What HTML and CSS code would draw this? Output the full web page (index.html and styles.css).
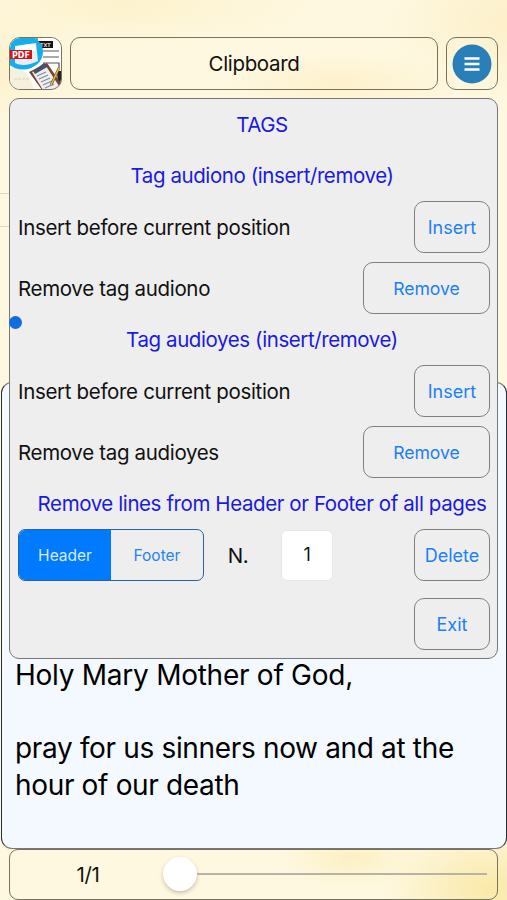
FILE: index.html
```html
<!DOCTYPE html>
<html lang="en">
<head>
<meta charset="utf-8">
<title>Clipboard</title>
<link rel="stylesheet" href="styles.css">
</head>
<body>
<header class="topbar">
  <div class="app-icon">
    <svg viewBox="0 0 52 52" width="52" height="52">
      <rect width="52" height="52" fill="#fff"/>
      <path d="M0 30Q20 29 24 52H0Z" fill="#f4f1de"/>
      <path d="M27 0v10M33 13h16M33 19h16M33 25h16v5" stroke="#555" stroke-width="1.2" fill="none"/>
      <rect x="27" y="3" width="16" height="7" fill="#151515"/>
      <text x="30" y="9" class="txt-label">TXT</text>
      <ellipse cx="13" cy="14" rx="20" ry="17.500" fill="#16aeea"/>
      <path d="M5 8L26 5L28 23Q14 30 5 25Z" fill="#e9ecf2"/>
      <path d="M7 9Q16 5 25 7L26 13H6Z" fill="#fff"/>
      <rect x="0" y="12" width="22" height="9" fill="#d3141d"/>
      <text x="2" y="19.500" class="pdf-label">PDF</text>
      <path d="M47 33h5v13l-4 4Z" fill="#222"/>
      <path d="M19 34L37 25L52 47V52H32Z" fill="#75452c"/>
      <path d="M22 34L36 28L49 48L47 52H33Z" fill="#eeeef2"/>
      <path d="M23 33L34 25L39 28L25 36Z" fill="#49516b"/>
      <path d="M27 38l9-4M29 41l9-4M31 44l9-4M33 47l9-4M35 50l9-4" stroke="#858b98" stroke-width="1.200"/>
      <path d="M49 30L41 47" stroke="#765020" stroke-width="2.600"/>
      <path d="M49 30L41 47" stroke="#e4b742" stroke-width="1.500"/>
      <path d="M4 41h16" stroke="#d8d4c4" stroke-dasharray="3 1"/>
    </svg>
  </div>
  <div class="title">Clipboard</div>
  <button class="menu" aria-label="Menu">
    <svg viewBox="0 0 40 40" width="40" height="40">
      <circle cx="20" cy="20" r="19.500" fill="#2980b9"/>
      <path d="M12.500 14.500h15M12.500 20h15M12.500 25.500h15" stroke="#fff" stroke-width="2.300"/>
    </svg>
  </button>
</header>
<main class="stage">
  <article class="document">
    <p>Holy Mary Mother of God,</p>
    <p class="long">pray for us sinners now and at the<br>hour of our death</p>
  </article>
  <section class="panel">
    <h1 class="heading tags">TAGS</h1>
    <h2 class="heading">Tag audiono (insert/remove)</h2>
    <div class="row"><span class="label">Insert before current position</span><button class="btn">Insert</button></div>
    <div class="row"><span class="label">Remove tag audiono</span><button class="btn wide">Remove</button></div>
    <h2 class="heading">Tag audioyes (insert/remove)</h2>
    <div class="row"><span class="label">Insert before current position</span><button class="btn">Insert</button></div>
    <div class="row"><span class="label">Remove tag audioyes</span><button class="btn wide">Remove</button></div>
    <h2 class="heading">Remove lines from Header or Footer of all pages</h2>
    <div class="row">
      <div class="segments"><span class="segment active">Header</span><span class="segment">Footer</span></div>
      <span class="number-label">N.</span>
      <span class="number">1</span>
      <button class="btn">Delete</button>
    </div>
    <div class="row last"><button class="btn">Exit</button></div>
    <i class="handle"></i>
  </section>
</main>
<footer class="pager">
  <span class="page">1/1</span>
  <div class="slider"><i class="thumb"></i><i class="track"></i></div>
</footer>
</body>
</html>
```
FILE: styles.css
```css
* { box-sizing: border-box; }
body {
  margin: 0;
  width: 507px;
  height: 900px;
  overflow: hidden;
  display: flex;
  flex-direction: column;
  font-family: Inter, sans-serif;
  font-size: 20.5px;
  letter-spacing: -0.35px;
  color: #111;
  background:
    linear-gradient(#ddd9c0, #ddd9c0) 0 193px / 10px 1px no-repeat,
    linear-gradient(#ddd9c0, #ddd9c0) 0 226px / 10px 1px no-repeat,
    radial-gradient(ellipse 110px 70px at 490px 890px, #fae9a8, transparent),
    radial-gradient(ellipse 70px 32px at 350px 857px, #fcf0c2, transparent),
    radial-gradient(ellipse 90px 60px at 0 65px, #fdf1cb, transparent),
    radial-gradient(ellipse 120px 30px at 340px 83px, #fef1cc, transparent),
    radial-gradient(ellipse 200px 40px at 120px 5px, #fdf2cd, transparent),
    radial-gradient(ellipse 120px 80px at 507px 20px, #fdf0ca, transparent),
    #fef8e0;
}
button { font-family: inherit; margin: 0; padding: 0; background: none; }
svg { display: block; }
.topbar { display: flex; gap: 8px; padding: 37px 9px 0; height: 97px; flex: none; }
.app-icon, .title, .menu { height: 53px; border: 1px solid #77735f; border-radius: 10px; }
.app-icon { width: 53px; overflow: hidden; flex: none; border-radius: 11px; }
.pdf-label { font: bold 8px "DejaVu Sans"; letter-spacing: 0; fill: #fff; }
.txt-label { font: bold 5px "DejaVu Sans"; letter-spacing: 0; fill: #ddd; }
.title { flex: 1; display: flex; align-items: center; justify-content: center; }
.menu { width: 52px; flex: none; display: flex; align-items: center; justify-content: center; }
.stage { display: grid; grid-template: 285px 467px / 507px; flex: none; }
.document {
  grid-area: 2 / 1;
  margin-left: 1px;
  padding: 274px 13px 0;
  background: #f4f9ff;
  border: 1px solid #777;
  border-left-color: #292d35;
  border-right-color: #292d35;
  border-radius: 11px;
  color: #000;
  font-size: 28px;
  letter-spacing: -0.26px;
  line-height: 36.5px;
  white-space: nowrap;
}
.document p { margin: 0 0 36.5px; }
.document .long { letter-spacing: -0.34px; }
.panel {
  grid-area: 1 / 1 / 3 / 2;
  position: relative;
  align-self: start;
  width: 489px;
  height: 561px;
  margin: 1px 0 0 9px;
  padding: 0 7px 0 8px;
  background: #eee;
  border: 1px solid #777;
  border-radius: 10px;
}
.heading {
  margin: 0;
  height: 51px;
  padding-left: 16px;
  font-size: 20.5px;
  font-weight: 400;
  letter-spacing: -0.41px;
  line-height: 51px;
  text-align: center;
  color: #1a1ae0;
  white-space: nowrap;
}
.row { height: 52px; margin-bottom: 9px; display: flex; align-items: center; }
.row + .heading { margin-top: -9px; }
.label { white-space: nowrap; letter-spacing: -0.33px; }
.btn {
  width: 76px;
  height: 52px;
  margin-left: auto;
  border: 1px solid #808080;
  border-radius: 10px;
  font-size: 18px;
  color: #1b80f5;
}
.btn.wide { width: 127px; font-size: 17.6px; }
.row:has(+ .heading) { margin-bottom: 9px; }
.last { margin-top: 17px; }
.segments {
  display: flex;
  width: 186px;
  height: 52px;
  border: 1px solid #27639f;
  border-radius: 7px;
  overflow: hidden;
  font-size: 15.5px;
  letter-spacing: 0;
  color: #2584f0;
}
.segment { flex: 1; display: flex; align-items: center; justify-content: center; }
.segment.active { background: #007aff; color: #d9ebff; }
.number-label { width: 66px; padding-left: 2px; text-align: center; }
.number {
  width: 52px;
  height: 51px;
  margin-left: 11px;
  background: #fff;
  border: 1px solid #e8e8e8;
  border-radius: 6px;
  font-size: 18px;
  line-height: 48px;
  text-align: center;
}
.handle { position: absolute; left: -1px; top: 217px; width: 13px; height: 13px; border-radius: 50%; background: #146bdd; }
.pager {
  width: 489px;
  height: 51px;
  flex: none;
  margin-left: 9px;
  border: 1px solid #77735f;
  border-radius: 9px;
  display: flex;
  align-items: center;
}
.page { width: 153px; text-align: center; padding-left: 3px; }
.slider { display: flex; align-items: center; width: 324px; margin-top: -1px; }
.thumb { width: 34px; height: 34px; flex: none; border-radius: 50%; background: #fff; box-shadow: 0 2px 4px rgba(0, 0, 0, .22); }
.track { flex: 1; height: 2px; background: #b8b3a7; }
```
